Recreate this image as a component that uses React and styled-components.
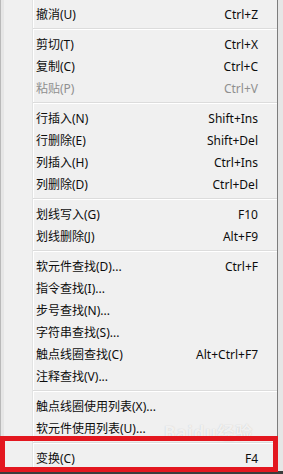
import styled, { createGlobalStyle } from "styled-components";

const GlobalStyle = createGlobalStyle`
  body {
    margin: 0;
    background: #3b3b3b;
  }
`;

const Page = styled.div`
  position: relative;
  width: 283px;
  height: 474px;
  overflow: hidden;
  background: #e6e6e6;
  display: flex;
  flex-direction: column;
  font-family: "Noto Sans", "Noto Sans CJK SC", sans-serif;
`;

const Body = styled.div`
  display: flex;
  flex: 1;
  padding-left: 3px;
  border-left: 1px solid #b9b9b9;
`;

const Menu = styled.div`
  width: 273px;
  padding: 3px 0 2px;
  border-right: 1px solid #7d7d7d;
  background: linear-gradient(
      to right,
      transparent 28px,
      #e2e3e3 28px,
      #e2e3e3 29px,
      #ffffff 29px,
      #ffffff 30px,
      transparent 30px
    ),
    #f0f0f0;
  display: flex;
  flex-direction: column;
`;

const Row = styled.div`
  height: 22px;
  display: flex;
  align-items: center;
  justify-content: space-between;
  padding: 0 19px 0 32px;
  font-size: 12px;
  color: ${(p) => (p.disabled ? "#8f8f8f" : "#0d0d0d")};
`;

const Separator = styled.div`
  height: 8px;
  margin-left: 29px;
  display: flex;
  flex-direction: column;
  justify-content: center;
  &::before {
    content: "";
    height: 1px;
    background: #dcdcdc;
  }
  &::after {
    content: "";
    height: 1px;
    background: #ffffff;
  }
`;

const BottomEdge = styled.div`
  height: 3px;
  background: #3b3b3b;
`;

const Highlight = styled.div`
  position: absolute;
  left: 0;
  top: 436px;
  width: 268px;
  height: 26px;
  border: 5px solid #e3171f;
`;

const Watermark = styled.div`
  position: absolute;
  left: 164px;
  top: 423px;
  font-size: 17px;
  line-height: 20px;
  font-weight: 700;
  letter-spacing: 1px;
  color: rgba(255, 255, 255, 0.75);
  text-shadow: 0 0 1px rgba(150, 150, 150, 0.5);
`;

const items = [
  ["撤消(U)", "Ctrl+Z"],
  "-",
  ["剪切(T)", "Ctrl+X"],
  ["复制(C)", "Ctrl+C"],
  ["粘贴(P)", "Ctrl+V", true],
  "-",
  ["行插入(N)", "Shift+Ins"],
  ["行删除(E)", "Shift+Del"],
  ["列插入(H)", "Ctrl+Ins"],
  ["列删除(D)", "Ctrl+Del"],
  "-",
  ["划线写入(G)", "F10"],
  ["划线删除(J)", "Alt+F9"],
  "-",
  ["软元件查找(D)...", "Ctrl+F"],
  ["指令查找(I)...", ""],
  ["步号查找(N)...", ""],
  ["字符串查找(S)...", ""],
  ["触点线圈查找(C)", "Alt+Ctrl+F7"],
  ["注释查找(V)...", ""],
  "-",
  ["触点线圈使用列表(X)...", ""],
  ["软元件使用列表(U)...", ""],
  "-",
  ["变换(C)", "F4"],
];

const App = () => {
  return (
    <>
      <GlobalStyle />
      <Page>
        <Body>
          <Menu>
            {items.map((it, i) =>
              it === "-" ? (
                <Separator key={i} />
              ) : (
                <Row key={i} disabled={it[2]}>
                  <span>{it[0]}</span>
                  <span>{it[1]}</span>
                </Row>
              )
            )}
          </Menu>
        </Body>
        <BottomEdge />
        <Watermark>Baidu经验</Watermark>
        <Highlight />
      </Page>
    </>
  );
};

export default App;
